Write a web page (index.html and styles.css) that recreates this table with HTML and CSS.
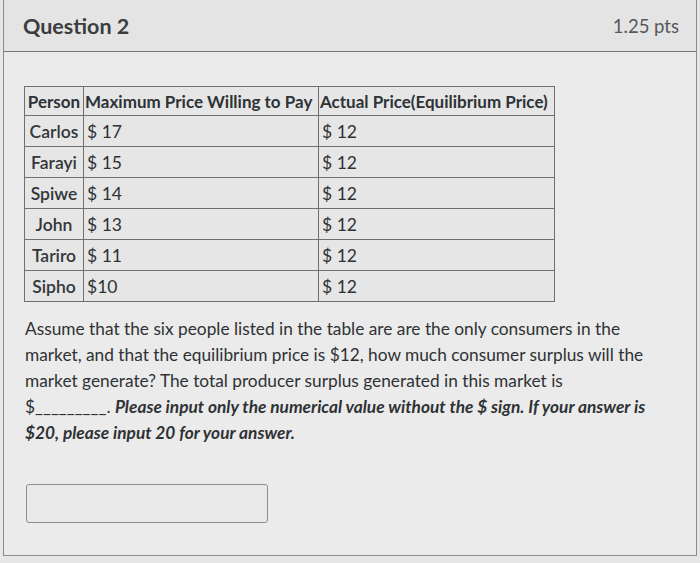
FILE: index.html
```html
<!DOCTYPE html>
<html>
<head>
<meta charset="utf-8">
<link rel="stylesheet" href="styles.css">
</head>
<body>
<div class="question">
  <div class="q-header">
    <span class="q-title">Question 2</span>
    <span class="q-pts">1.25 pts</span>
  </div>
  <div class="q-body">
    <table class="prices">
      <colgroup>
        <col class="c1"><col class="c2"><col class="c3">
      </colgroup>
      <tr><th>Person</th><th class="left">Maximum Price Willing to Pay</th><th class="left">Actual Price(Equilibrium Price)</th></tr>
      <tr><td class="name">Carlos</td><td>$ 17</td><td>$ 12</td></tr>
      <tr><td class="name">Farayi</td><td>$ 15</td><td>$ 12</td></tr>
      <tr><td class="name">Spiwe</td><td>$ 14</td><td>$ 12</td></tr>
      <tr><td class="name">John</td><td>$ 13</td><td>$ 12</td></tr>
      <tr><td class="name">Tariro</td><td>$ 11</td><td>$ 12</td></tr>
      <tr><td class="name">Sipho</td><td>$10</td><td>$ 12</td></tr>
    </table>
    <p class="text">Assume that the six people listed in the table are are the only consumers in the market, and that the equilibrium price is $12, how much consumer surplus will the market generate? The total producer surplus generated in this market is<br>$_________. <b><i>Please input only the numerical value without the $ sign. If your answer is $20, please input 20 for your answer.</i></b></p>
    <div class="answer"></div>
  </div>
</div>
</body>
</html>
```
FILE: styles.css
```css
html, body {
  margin: 0;
  padding: 0;
  background: #e6e7e6;
}
body {
  font-family: Lato, "Open Sans", sans-serif;
  color: #2e3236;
  width: 700px;
  height: 563px;
  overflow: hidden;
}
.question {
  margin: 0 3px;
  height: 556px;
  border: 1px solid #8a8c8c;
  border-top: none;
  box-sizing: border-box;
  background: #eaebea;
}
.q-header {
  height: 52px;
  box-sizing: border-box;
  border-bottom: 1px solid #77797a;
  background: #e3e4e3;
  display: flex;
  align-items: center;
  justify-content: space-between;
  padding: 0 17px 0 19px;
}
.q-title {
  font-size: 21.5px;
  font-weight: 700;
  color: #3b3d3f;
}
.q-pts {
  font-size: 18.5px;
  color: #55585b;
}
.q-body {
  padding: 34px 0 0 20px;
}
.prices {
  border-collapse: collapse;
  table-layout: fixed;
  width: 530px;
  font-size: 17.5px;
  background: #e5e6e5;
}
.c1 { width: 59px; }
.c2 { width: 235px; }
.c3 { width: 236px; }
.prices th, .prices td {
  border: 1px solid #6d6f70;
  padding: 0 3px;
  white-space: nowrap;
  overflow: hidden;
}
.prices th {
  height: 28px;
  font-size: 17px;
  font-weight: 700;
  text-align: center;
  padding: 0 1px;
}
.prices th.left { text-align: left; }
.prices td {
  height: 30px;
}
.prices td.name {
  text-align: center;
  font-weight: 600;
  color: #34373a;
}
.text {
  margin: 14px 0 0 1px;
  width: 628px;
  font-size: 17.3px;
  line-height: 26px;
  color: #2f3235;
}
.answer {
  margin: 38px 0 0 2px;
  width: 242px;
  height: 39px;
  box-sizing: border-box;
  border: 1px solid #8c8e8f;
  border-radius: 3px;
  background: #e8e9e8;
}
```
